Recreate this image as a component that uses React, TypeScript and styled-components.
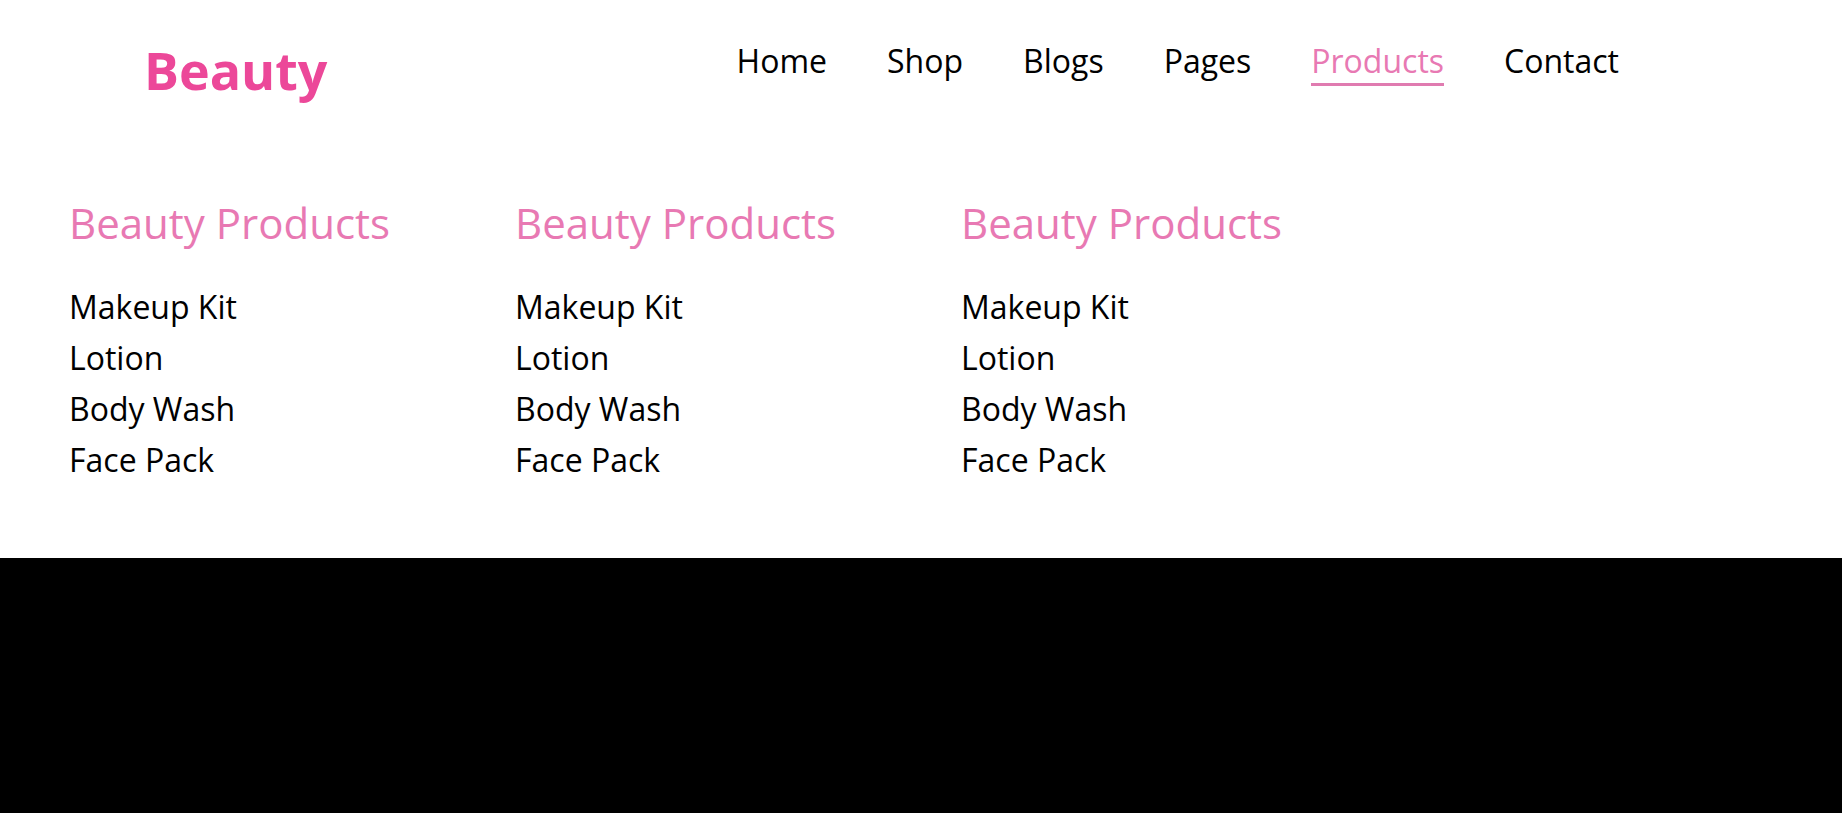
import React from "react";
import styled, { createGlobalStyle } from "styled-components";

const GlobalStyle = createGlobalStyle`
  * { box-sizing: border-box; }
  body { margin: 0; background: #000; font-family: "Segoe UI", "Open Sans", "Noto Sans", sans-serif; color: #000; }
`;

const Header = styled.header`
  background: #fff;
  padding: 40px 69px 73px;
`;

const Bar = styled.div`
  display: flex;
  justify-content: space-between;
  align-items: flex-start;
  padding: 0 154px 0 75px;
`;

const Brand = styled.a`
  color: #ec4899;
  font-size: 52px;
  line-height: 60px;
  font-weight: 700;
  text-decoration: none;
`;

const Nav = styled.nav`
  display: flex;
  gap: 60px;
`;

const NavLink = styled.a<{ $active?: boolean }>`
  color: ${(p) => (p.$active ? "#e879b3" : "#000")};
  border-bottom: 3px solid ${(p) => (p.$active ? "#e07bb0" : "transparent")};
  padding-bottom: 2px;
  font-size: 32px;
  line-height: 41px;
  text-decoration: none;
`;

const Menu = styled.div`
  display: grid;
  grid-template-columns: repeat(3, 446px);
  padding-top: 91px;
`;

const Title = styled.h2`
  margin: 0 0 26px;
  color: #e879b3;
  font-size: 42px;
  line-height: 64px;
  font-weight: 400;
`;

const List = styled.ul`
  margin: 0;
  padding: 0;
  list-style: none;
`;

const Item = styled.a`
  display: block;
  color: #000;
  font-size: 32px;
  line-height: 51px;
  text-decoration: none;
`;

const links = ["Home", "Shop", "Blogs", "Pages", "Products", "Contact"];
const columns = ["first", "second", "third"];
const products = ["Makeup Kit", "Lotion", "Body Wash", "Face Pack"];

export default function App() {
  return (
    <>
      <GlobalStyle />
      <Header>
        <Bar>
          <Brand href="#">Beauty</Brand>
          <Nav>
            {links.map((l) => (
              <NavLink key={l} href="#" $active={l === "Products"}>{l}</NavLink>
            ))}
          </Nav>
        </Bar>
        <Menu>
          {columns.map((c) => (
            <section key={c}>
              <Title>Beauty Products</Title>
              <List>
                {products.map((p) => (
                  <li key={p}><Item href="#">{p}</Item></li>
                ))}
              </List>
            </section>
          ))}
        </Menu>
      </Header>
    </>
  );
}
